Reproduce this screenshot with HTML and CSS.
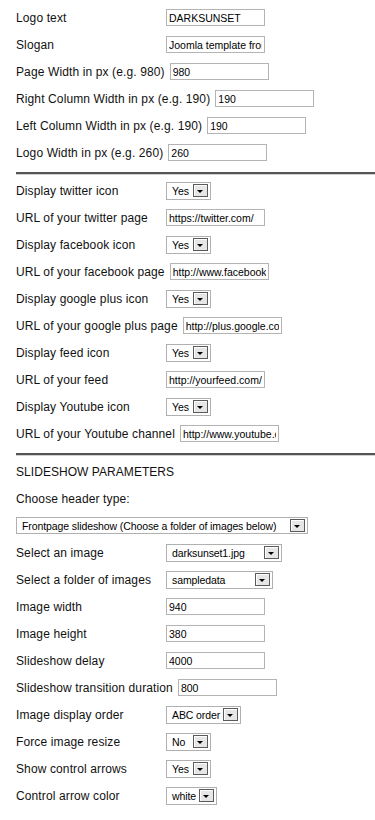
FILE: index.html
```html
<!DOCTYPE html>
<html lang="en">
<head>
    <meta charset="UTF-8">
    <meta name="viewport" content="width=device-width, initial-scale=1.0">
    <title>Template parameters</title>
    <link rel="stylesheet" href="styles.css">
</head>
<body>

<div class="params">
    <div class="row"><label>Logo text</label><input class="field" type="text" value="DARKSUNSET"></div>
    <div class="row"><label>Slogan</label><input class="field" type="text" value="Joomla template from"></div>
    <div class="row"><label>Page Width in px (e.g. 980)</label><input class="field" type="text" value="980"></div>
    <div class="row"><label>Right Column Width in px (e.g. 190)</label><input class="field" type="text" value="190"></div>
    <div class="row"><label>Left Column Width in px (e.g. 190)</label><input class="field" type="text" value="190"></div>
    <div class="row"><label>Logo Width in px (e.g. 260)</label><input class="field" type="text" value="260"></div>

    <hr class="divider">

    <div class="row"><label>Display twitter icon</label><span class="select yn"><span class="value">Yes</span><span class="arrow"></span></span></div>
    <div class="row"><label>URL of your twitter page</label><input class="field" type="text" value="https://twitter.com/"></div>
    <div class="row"><label>Display facebook icon</label><span class="select yn"><span class="value">Yes</span><span class="arrow"></span></span></div>
    <div class="row"><label>URL of your facebook page</label><input class="field" type="text" value="http://www.facebook.com/"></div>
    <div class="row"><label>Display google plus icon</label><span class="select yn"><span class="value">Yes</span><span class="arrow"></span></span></div>
    <div class="row"><label>URL of your google plus page</label><input class="field" type="text" value="http://plus.google.com/"></div>
    <div class="row"><label>Display feed icon</label><span class="select yn"><span class="value">Yes</span><span class="arrow"></span></span></div>
    <div class="row"><label>URL of your feed</label><input class="field" type="text" value="http://yourfeed.com/"></div>
    <div class="row"><label>Display Youtube icon</label><span class="select yn"><span class="value">Yes</span><span class="arrow"></span></span></div>
    <div class="row"><label>URL of your Youtube channel</label><input class="field" type="text" value="http://www.youtube.com/"></div>

    <hr class="divider">

    <div class="row heading">SLIDESHOW PARAMETERS</div>
    <div class="row"><label>Choose header type:</label></div>
    <div class="row"><span class="select wide"><span class="value">Frontpage slideshow (Choose a folder of images below)</span><span class="arrow"></span></span></div>
    <div class="row"><label>Select an image</label><span class="select image"><span class="value">darksunset1.jpg</span><span class="arrow"></span></span></div>
    <div class="row"><label>Select a folder of images</label><span class="select folder"><span class="value">sampledata</span><span class="arrow"></span></span></div>
    <div class="row"><label>Image width</label><input class="field" type="text" value="940"></div>
    <div class="row"><label>Image height</label><input class="field" type="text" value="380"></div>
    <div class="row"><label>Slideshow delay</label><input class="field" type="text" value="4000"></div>
    <div class="row"><label>Slideshow transition duration</label><input class="field" type="text" value="800"></div>
    <div class="row"><label>Image display order</label><span class="select order"><span class="value">ABC order</span><span class="arrow"></span></span></div>
    <div class="row"><label>Force image resize</label><span class="select yn"><span class="value">No</span><span class="arrow"></span></span></div>
    <div class="row"><label>Show control arrows</label><span class="select yn"><span class="value">Yes</span><span class="arrow"></span></span></div>
    <div class="row"><label>Control arrow color</label><span class="select color"><span class="value">white</span><span class="arrow"></span></span></div>
</div>

</body>
</html>
```

FILE: styles.css
```css
body {
    margin: 0;
    font-family: "Liberation Sans", Arial, sans-serif;
    font-size: 12px;
    color: #111;
    background: #fff;
    overflow: hidden;
}
.params {
    padding: 4px 0 0 16px;
}
.row {
    display: flex;
    align-items: center;
    height: 27px;
    white-space: nowrap;
}
.row label {
    min-width: 145px;
    margin-right: 5px;
    letter-spacing: 0.12px;
}
.heading {
    letter-spacing: 0.05px;
}
.field {
    box-sizing: border-box;
    width: 99px;
    height: 17px;
    margin: 0;
    padding: 1px 2px 0;
    border: 1px solid #b4b4b4;
    font-family: "Liberation Sans", Arial, sans-serif;
    font-size: 10.5px;
    color: #000;
    background: #fff;
    outline: none;
}
.divider {
    height: 0;
    margin: 6px 0 2px;
    border: 0;
    border-top: 2px solid #555;
    border-bottom: 1px solid #cfcfcf;
}
.select {
    box-sizing: border-box;
    display: inline-flex;
    align-items: center;
    height: 18px;
    padding: 0 2px 0 5px;
    border: 1px solid #b0b0b0;
    background: #fff;
    font-size: 10.5px;
    letter-spacing: -0.1px;
    color: #000;
}
.select .value {
    padding-top: 1px;
    padding-right: 3px;
}
.select .arrow {
    box-sizing: border-box;
    position: relative;
    flex-shrink: 0;
    width: 15px;
    height: 13px;
    margin-left: auto;
    border: 1px solid #5a5a5a;
    background: #e6e6e6;
    box-shadow: inset 1px 1px 0 #fff;
}
.select .arrow::after {
    content: "";
    position: absolute;
    left: 3px;
    top: 5px;
    border-left: 3.5px solid transparent;
    border-right: 3.5px solid transparent;
    border-top: 3.5px solid #000;
}
.select.yn { width: 45px; }
.select.color { width: 51px; }
.select.order { width: 75px; }
.select.folder { width: 107px; }
.select.image { width: 116px; }
.select.wide { width: 292px; height: 17px; }
```
